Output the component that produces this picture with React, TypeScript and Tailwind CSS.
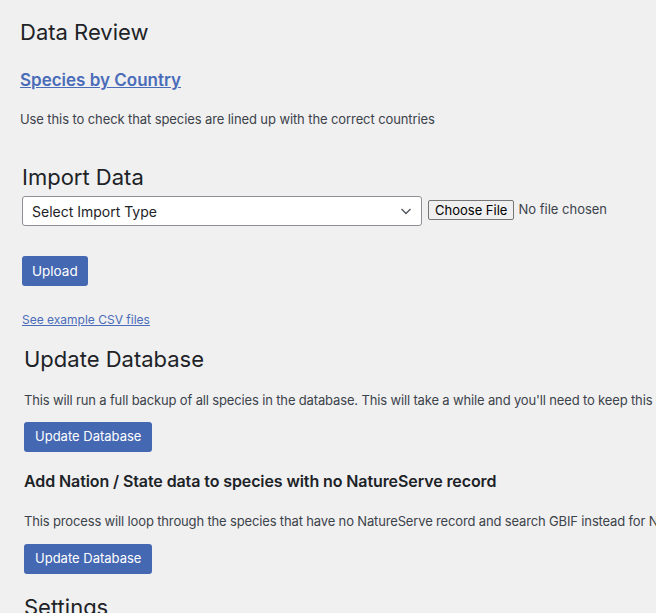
export default function App() {
  return (
    <div className="min-h-screen w-[656px] overflow-hidden bg-[#f0f0f1] text-[#1d2327] whitespace-nowrap" style={{ fontFamily: "Inter, 'Noto Sans', sans-serif" }}>
      <div className="pl-5 pt-[19px]">
        <h1 className="text-[22px] leading-[26px] font-normal">Data Review</h1>
        <a href="#" className="mt-[24px] block w-fit text-[17px] leading-[22px] font-semibold text-[#4a6cb8] underline">Species by Country</a>
        <p className="mt-[20px] text-[13px] leading-[16px] tracking-[-0.1px] text-[#3c434a]">Use this to check that species are lined up with the correct countries</p>

        <div className="pl-[2px] mt-[37px]">
          <h2 className="text-[22px] leading-[26px]">Import Data</h2>
          <div className="mt-[6px] flex items-center gap-[6px]">
            <div className="flex h-[30px] w-[400px] items-center justify-between rounded-[3px] border border-[#8c8f94] bg-white pl-[9px] pr-[8px] text-[14px]">
              <span>Select Import Type</span>
              <svg width="14" height="14" viewBox="0 0 14 14" fill="none" stroke="#50575e" strokeWidth="1.4"><path d="M2.5 5l4.5 4.5L11.5 5" /></svg>
            </div>
            <div className="-mt-[2px] flex items-center gap-[4px] text-[13px]">
              <span className="rounded-[2px] border border-[#767676] bg-[#efefef] px-[6px] leading-[18px] text-black">Choose File</span>
              <span className="text-[#3c434a]">No file chosen</span>
            </div>
          </div>
          <button className="mt-[30px] block h-[30px] rounded-[3px] bg-[#4568b2] px-[10px] text-[13.5px] text-white">Upload</button>
          <a href="#" className="mt-[26px] block w-fit text-[12px] leading-[16px] text-[#4a6cb8] underline">See example CSV files</a>
        </div>

        <div className="pl-[4px] mt-[18px]">
          <h2 className="text-[22px] leading-[26px]">Update Database</h2>
          <p className="mt-[20px] text-[13px] leading-[16px] tracking-[-0.15px] text-[#3c434a]">This will run a full backup of all species in the database. This will take a while and you'll need to keep this window open until it completes.</p>
          <button className="mt-[14px] block h-[30px] rounded-[3px] bg-[#4568b2] px-[11px] text-[13px] text-white">Update Database</button>
          <h3 className="mt-[19px] text-[16px] leading-[20px] font-semibold tracking-[-0.1px]">Add Nation / State data to species with no NatureServe record</h3>
          <p className="mt-[22px] text-[13px] leading-[16px] tracking-[-0.15px] text-[#3c434a]">This process will loop through the species that have no NatureServe record and search GBIF instead for Nation and State data.</p>
          <button className="mt-[15px] block h-[30px] rounded-[3px] bg-[#4568b2] px-[11px] text-[13px] text-white">Update Database</button>
          <h2 className="mt-[20px] text-[22px] leading-[26px]">Settings</h2>
        </div>
      </div>
    </div>
  )
}
